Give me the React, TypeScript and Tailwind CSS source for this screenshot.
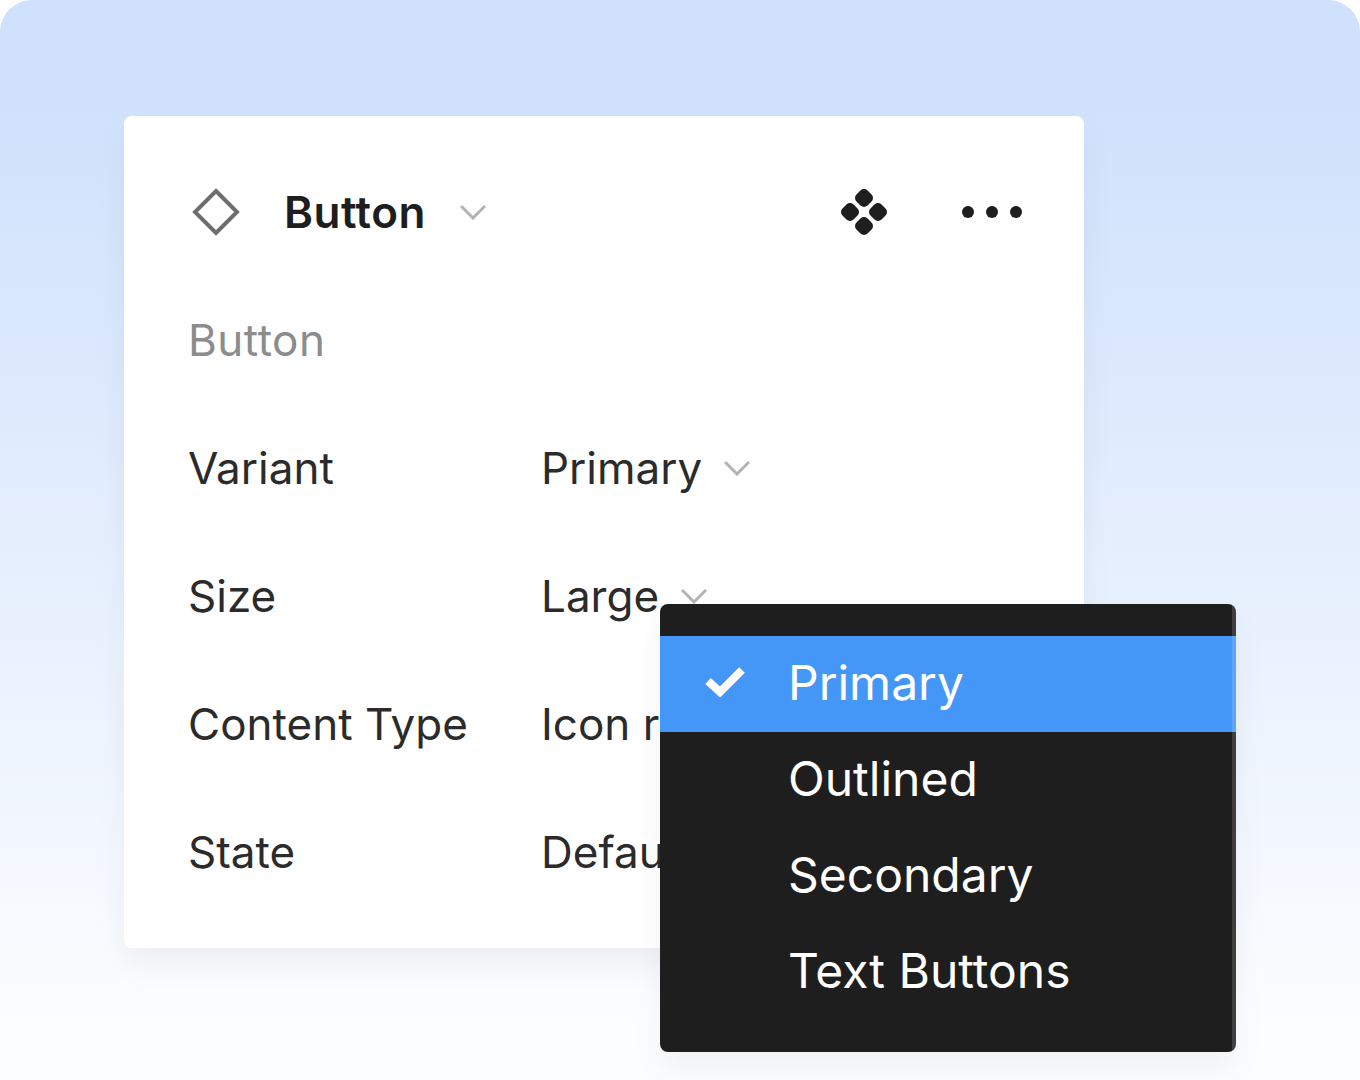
const ROWS = [
  { label: "Variant", value: "Primary" },
  { label: "Size", value: "Large" },
  { label: "Content Type", value: "Icon right" },
  { label: "State", value: "Default" },
];

const OPTIONS = ["Primary", "Outlined", "Secondary", "Text Buttons"];

function Chevron({ className }: { className?: string }) {
  return (
    <svg width="26" height="16" viewBox="0 0 26 16" fill="none" className={className}>
      <path d="M1 2l12 12L25 2" stroke="#b3b3b3" strokeWidth="3" />
    </svg>
  );
}

export default function App() {
  return (
    <div className="relative h-[1080px] w-[1360px] overflow-hidden bg-white font-['Inter',sans-serif]">
      <div className="h-full w-full rounded-t-[32px] bg-gradient-to-b from-[#cfe1fc] from-[8%] to-[#fcfdff] to-[95%] pt-[116px] pl-[124px]">
        {/* Properties panel */}
        <div className="w-[960px] rounded-lg bg-white px-16 py-8 shadow-[0_16px_32px_rgba(0,0,0,0.05)]">
          <div className="flex h-32 items-center">
            <svg width="48" height="48" viewBox="0 0 48 48" fill="none" className="ml-1">
              <path d="M24 3L45 24 24 45 3 24z" stroke="#6e6e6e" strokeWidth="4" />
            </svg>
            <span className="ml-[44px] text-[44px] font-semibold tracking-[0.5px] text-[#1e1e1e]">Button</span>
            <Chevron className="ml-[34px]" />
            <svg width="48" height="48" viewBox="0 0 48 48" fill="#1e1e1e" stroke="#1e1e1e" strokeWidth="10" strokeLinejoin="round" className="ml-auto mr-[74px]">
              <path d="M24 6l4 4-4 4-4-4z" />
              <path d="M24 34l4 4-4 4-4-4z" />
              <path d="M10 20l4 4-4 4-4-4z" />
              <path d="M38 20l4 4-4 4-4-4z" />
            </svg>
            <svg width="60" height="14" viewBox="0 0 60 14" fill="#1e1e1e" className="-mr-[2px]">
              <circle cx="6" cy="7" r="6" />
              <circle cx="30" cy="7" r="6" />
              <circle cx="54" cy="7" r="6" />
            </svg>
          </div>
          <div className="flex h-32 items-center text-[44px] tracking-[0.5px] text-[#8c8c8c]">Button</div>
          {ROWS.map((row) => (
            <div key={row.label} className="flex h-32 items-center text-[44px] text-[#2b2b2b]">
              <span className="w-[353px]">{row.label}</span>
              <span>{row.value}</span>
              <Chevron className="ml-[22px]" />
            </div>
          ))}
        </div>
      </div>

      {/* Dropdown menu */}
      <div className="absolute top-[604px] left-[660px] w-[576px] rounded-lg bg-[#1e1e1e] shadow-[0_16px_32px_rgba(0,0,0,0.05)]">
        <div className="relative overflow-hidden rounded-lg py-8">
          {OPTIONS.map((option, i) => (
            <div
              key={option}
              className={`flex h-24 items-center pb-[2px] text-[48px] text-white ${i === 0 ? "bg-[#4597f7]" : ""}`}
            >
              <span className="flex w-[128px] justify-end pr-[43px]">
                {i === 0 && (
                  <svg width="40" height="30" viewBox="0 0 40 30" fill="none" className="-mt-[2px]">
                    <path d="M3 14l12 11L37 3" stroke="#fff" strokeWidth="8" />
                  </svg>
                )}
              </span>
              <span>{option}</span>
            </div>
          ))}
          {/* Translucent strip on the right edge */}
          <div className="absolute inset-y-0 right-0 w-1 bg-white/15" />
        </div>
      </div>
    </div>
  );
}
